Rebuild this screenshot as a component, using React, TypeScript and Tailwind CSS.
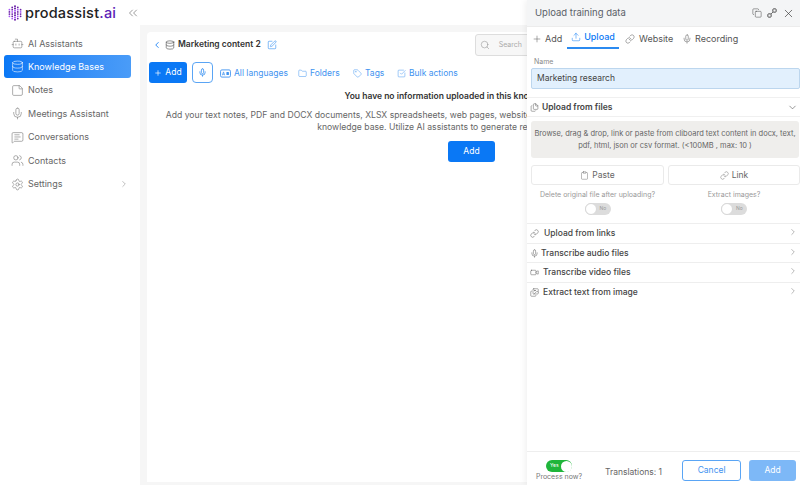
import {
  Bot,
  CheckSquare,
  ChevronDown,
  ChevronLeft,
  ChevronRight,
  ChevronsLeft,
  Clipboard,
  Copy,
  Database,
  Files,
  Folder,
  Images,
  Link,
  MessageSquareText,
  Mic,
  Plus,
  Search,
  Settings,
  SquarePen,
  StickyNote,
  Tag,
  Upload,
  Users,
  Video,
  X,
} from "lucide-react";

function LanguageIcon({ size = 10 }: { size?: number; strokeWidth?: number }) {
  return (
    <svg width={size + 2} height={size} viewBox="0 0 12 10" fill="none" stroke="currentColor" strokeWidth="1">
      <rect x="0.5" y="1" width="11" height="8" rx="1.5" />
      <path d="M2.5 7 3.8 3.2 5 7M3 5.8h1.6" strokeWidth="0.8" />
      <rect x="7" y="3.2" width="2.8" height="3.4" rx="0.6" fill="currentColor" stroke="none" />
    </svg>
  );
}

const navItems = [
  { label: "AI Assistants", icon: Bot, h: "h-[23px]" },
  { label: "Knowledge Bases", icon: Database, active: true, h: "h-[23px]" },
  { label: "Notes", icon: StickyNote, h: "h-[24px]" },
  { label: "Meetings Assistant", icon: Mic, h: "h-[23px]" },
  { label: "Conversations", icon: MessageSquareText, h: "h-[24px]" },
  { label: "Contacts", icon: Users, h: "h-[23px]" },
  { label: "Settings", icon: Settings, chevron: true, h: "h-[24px]" },
];

const toolbarItems = [
  { label: "All languages", icon: LanguageIcon, cls: "w-[78px]" },
  { label: "Folders", icon: Folder, cls: "w-[55px]" },
  { label: "Tags", icon: Tag, cls: "w-[44px]" },
  { label: "Bulk actions", icon: CheckSquare, cls: "w-[70px]" },
];

const collapsedRows = [
  { label: "Upload from links", icon: Link, h: "h-[20px]", gap: "ml-[5px]" },
  { label: "Transcribe audio files", icon: Mic, h: "h-[19px]", gap: "ml-[2px]" },
  { label: "Transcribe video files", icon: Video, h: "h-[20px]", gap: "ml-[4px]" },
  { label: "Extract text from image", icon: Images, h: "h-[20px]", gap: "ml-[4px]" },
];

function Logo() {
  const dots: [number, number, number][] = [];
  const cols = [4, 6, 7, 6, 4];
  cols.forEach((n, c) => {
    for (let i = 0; i < n; i++) {
      const y = 8 - ((n - 1) * 2.4) / 2 + i * 2.4;
      dots.push([1.5 + c * 3, y, c === 2 ? 1.1 : 0.95]);
    }
  });
  return (
    <svg width="14" height="16" viewBox="0 0 15 16" className="shrink-0">
      {dots.map(([x, y, r], i) => (
        <circle key={i} cx={x} cy={y} r={r} fill={i % 3 === 0 ? "#a855f7" : "#6b21a8"} />
      ))}
    </svg>
  );
}

function Toggle({ label }: { label: string }) {
  return (
    <div className="w-[26px] h-[12px] rounded-full bg-[#dcdcdc] flex items-center relative">
      <div className="w-[12px] h-[12px] rounded-full bg-white border border-[#d8d8d8]" />
      <span className="text-[5px] text-[#999] ml-[3px]">{label}</span>
    </div>
  );
}

function ExpandIcon() {
  return (
    <svg width="10" height="10" viewBox="0 0 12 12" fill="none" stroke="#444" strokeWidth="1.1">
      <rect x="1" y="7" width="4" height="4" rx="1" />
      <rect x="7" y="1" width="4" height="4" rx="1" />
      <path d="M5 7 7 5" />
    </svg>
  );
}

export default function App() {
  return (
    <div className="relative w-[800px] h-[485px] overflow-hidden flex bg-[#f6f6f6] text-[#444] [font-family:Inter,sans-serif]">
      <aside className="w-[140px] h-full bg-white shrink-0 pl-[4px] pr-[9px]">
        <div className="h-[32px] flex items-center pl-[4px] pb-[6px]">
          <Logo />
          <span className="ml-[3px] text-[14.5px] font-medium text-[#222] tracking-[0.2px] whitespace-nowrap">
            prodassist<span className="text-[#5b21b6]">.ai</span>
          </span>
          <ChevronsLeft size={14} strokeWidth={1} className="ml-[10px] shrink-0 text-[#555]" />
        </div>
        <nav className="flex flex-col">
          {navItems.map((item) => {
            const Icon = item.icon;
            return (
              <div
                key={item.label}
                className={`${item.h} flex items-center pl-[7px] text-[9px] rounded-[3px] ${
                  item.active
                    ? "bg-gradient-to-r from-[#0a78f5] to-[#4a9cf8] text-white"
                    : "text-[#666]"
                }`}
              >
                <Icon size={13} strokeWidth={1.1} className={item.active ? "text-white" : "text-[#777]"} />
                <span className="ml-[4px] flex-1 whitespace-nowrap">{item.label}</span>
                {item.chevron && <ChevronRight size={10} strokeWidth={1} className="mr-[2px] text-[#666]" />}
              </div>
            );
          })}
        </nav>
      </aside>

      <main className="flex-1 min-w-0 flex flex-col">
        <div className="h-[25px] bg-white shrink-0" />
        <section className="mt-[7px] ml-[7px] mr-[4px] mb-[3px] flex-1 bg-white rounded-t-[4px] px-[2px]">
          <div className="h-[24px] flex items-center pt-[1px]">
            <ChevronLeft size={10} className="ml-[3px] text-[#0a78f5]" />
            <Database size={10} strokeWidth={1.4} className="ml-[3px] text-[#444]" />
            <span className="ml-[3px] text-[8.5px] font-semibold text-[#333] whitespace-nowrap">Marketing content 2</span>
            <SquarePen size={10} strokeWidth={1.4} className="ml-[6px] text-[#2b8af0]" />
            <div className="ml-[198px] mt-[1px] w-[100px] h-[22px] rounded-[3px] border border-[#ddd] bg-[#f7f7f7] flex items-center pl-[4px]">
              <Search size={10} strokeWidth={1.2} className="text-[#888]" />
              <span className="ml-[9px] text-[7px] text-[#aaa]">Search</span>
            </div>
          </div>
          <div className="mt-[6px] h-[21px] flex items-center">
            <button className="w-[38px] h-[21px] rounded-[3px] bg-[#0a78f5] text-white text-[8.5px] flex items-center justify-center gap-[3px]">
              <Plus size={8} />
              Add
            </button>
            <button className="ml-[5px] w-[21px] h-[21px] rounded-[4px] border border-[#5aa5f5] flex items-center justify-center">
              <Mic size={9} className="text-[#2b8af0]" />
            </button>
            <div className="ml-[7px] pt-[1px] flex items-center text-[8.5px] text-[#3f93f0]">
              {toolbarItems.map((t) => {
                const Icon = t.icon;
                return (
                  <div key={t.label} className={`${t.cls} flex items-center gap-[3px]`}>
                    <Icon size={9} strokeWidth={1.3} />
                    <span>{t.label}</span>
                  </div>
                );
              })}
            </div>
          </div>
          <div className="mt-[7px] flex flex-col items-center">
            <p className="h-[12px] leading-[12px] text-[8.5px] font-semibold text-[#333] whitespace-nowrap">
              You have no information uploaded in this knowledge base yet.
            </p>
            <p className="mt-[7px] text-center text-[8.65px] leading-[12px] text-[#666] whitespace-nowrap">
              Add your text notes, PDF and DOCX documents, XLSX spreadsheets, web pages, websites, images, audio and video
              recordings and more to your own
              <br />
              knowledge base. Utilize AI assistants to generate responses from your files.
            </p>
            <button className="mt-[8px] w-[47px] h-[21px] rounded-[3px] bg-[#0a78f5] text-white text-[8.5px]">Add</button>
          </div>
        </section>
      </main>

      <div className="absolute top-0 right-0 w-[273px] h-full bg-white flex flex-col shadow-[-2px_0_6px_rgba(0,0,0,0.06)]">
        <div className="h-[27px] shrink-0 bg-[#f4f5f6] flex items-center pl-[8px] pr-[5px] border-b border-[#ececec]">
          <span className="flex-1 text-[9.5px] text-[#5a6068]">Upload training data</span>
          <Copy size={10} strokeWidth={1.2} className="text-[#444]" />
          <span className="ml-[5px]"><ExpandIcon /></span>
          <X size={13} strokeWidth={1.2} className="ml-[5px] text-[#333]" />
        </div>
        <div className="h-[22px] shrink-0 flex items-stretch pl-[5px] text-[9px] text-[#555]">
          <div className="flex items-center gap-[3px] w-[35px] pt-[1px]">
            <Plus size={10} strokeWidth={1.2} />
            Add
          </div>
          <div className="flex items-center justify-center gap-[3px] w-[52px] text-[#0a78f5] font-medium border-b-[2px] border-[#2b8af0]">
            <Upload size={10} strokeWidth={1.2} />
            Upload
          </div>
          <div className="ml-[6px] flex items-center gap-[4px] w-[57px] pt-[1px]">
            <Link size={10} strokeWidth={1.2} />
            Website
          </div>
          <div className="flex items-center gap-[3px] pt-[1px]">
            <Mic size={10} strokeWidth={1.2} />
            Recording
          </div>
        </div>

        <div className="mt-[7px] pl-[4px]">
          <div className="h-[11px] leading-[11px] text-[7px] text-[#8a8a8a] pl-[3px]">Name</div>
          <div className="mt-[1px] h-[21px] rounded-[2px] bg-[#e2f0fd] border border-[#bcd6ee] flex items-center pl-[5px] text-[8.5px] text-[#444]">
            Marketing research
          </div>
        </div>

        <div className="mt-[8px] h-[20px] shrink-0 border-y border-[#f0f0f0] flex items-center pl-[3px] pr-[2px]">
          <Files size={9} strokeWidth={1.3} className="text-[#555]" />
          <span className="ml-[3px] flex-1 text-[8.5px] font-semibold text-[#444]">Upload from files</span>
          <ChevronDown size={11} strokeWidth={1.2} className="text-[#444]" />
        </div>

        <div className="mt-[4px] mx-[4px] mr-[1px] h-[37px] rounded-[3px] bg-[#efeeec] flex items-center justify-center text-center text-[7.5px] leading-[12px] text-[#666]">
          Browse, drag &amp; drop, link or paste from cliboard text content in docx, text, pdf, html, json or csv format. (&lt;100MB , max: 10 )
        </div>

        <div className="mt-[7px] pl-[4px] grid grid-cols-[133px_132px] gap-[4px]">
          <div className="h-[20px] border border-[#eaeaea] rounded-[3px] flex items-center justify-center gap-[3px] text-[8.5px] text-[#666]">
            <Clipboard size={9} strokeWidth={1.2} />
            Paste
          </div>
          <div className="h-[20px] border border-[#eaeaea] rounded-[3px] flex items-center justify-center gap-[3px] text-[8.5px] text-[#666]">
            <Link size={9} strokeWidth={1.2} />
            Link
          </div>
        </div>

        <div className="mt-[5px] pl-[4px] grid grid-cols-[133px_132px] gap-[4px] text-[7px] text-[#999]">
          <div className="flex flex-col items-center">
            <span className="h-[10px] leading-[10px] whitespace-nowrap">Delete original file after uploading?</span>
            <div className="mt-[3px]"><Toggle label="No" /></div>
          </div>
          <div className="flex flex-col items-center">
            <span className="h-[10px] leading-[10px]">Extract images?</span>
            <div className="mt-[3px]"><Toggle label="No" /></div>
          </div>
        </div>

        <div className="mt-[8px]">
          {collapsedRows.map((row) => {
            const Icon = row.icon;
            return (
              <div
                key={row.label}
                className={`${row.h} border-t border-[#eeeeee] flex items-center pl-[3px] pr-[2px]`}
              >
                <Icon size={9} strokeWidth={1.3} className="text-[#555]" />
                <span className={`${row.gap} flex-1 text-[8.5px] font-medium text-[#444]`}>{row.label}</span>
                <ChevronRight size={10} strokeWidth={1} className="mb-[3px] text-[#555]" />
              </div>
            );
          })}
        </div>

        <div className="mt-auto h-[34px] shrink-0 border-t border-[#eeeeee] flex items-start">
          <div className="w-[64px] flex flex-col items-center pt-[8px]">
            <div className="w-[26px] h-[12px] rounded-full bg-[#1fb53a] flex items-center justify-end relative">
              <span className="absolute left-[4px] text-[5px] text-white">Yes</span>
              <div className="w-[11px] h-[11px] rounded-full bg-white" />
            </div>
            <span className="text-[7px] leading-[10px] text-[#777]">Process now?</span>
          </div>
          <span className="ml-[14px] mt-[14px] text-[8.5px] leading-[12px] text-[#666]">Translations: 1</span>
          <button className="ml-[20px] mt-[8px] w-[59px] h-[21px] rounded-[3px] border border-[#5aa5f5] text-[8.5px] text-[#3f93f0]">
            Cancel
          </button>
          <button className="ml-[8px] mt-[8px] w-[47px] h-[21px] rounded-[3px] bg-[#7db8f7] text-[8.5px] text-white">
            Add
          </button>
        </div>
      </div>
    </div>
  );
}
